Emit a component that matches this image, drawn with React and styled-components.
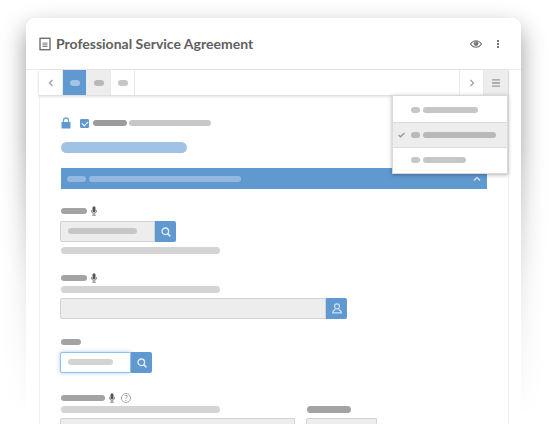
import styled, { createGlobalStyle, css } from 'styled-components'
import { useState } from 'react'

const tabs = ['Page one', 'Page two', 'Page three']

const sections = [
    { name: 'First section', width: 55 },
    { name: 'Second section', width: 73 },
    { name: 'Third section', width: 43 },
]

const DocumentIcon = () => (
    <svg width='12' height='14' viewBox='0 0 12 14' fill='none' stroke='#6f6f6f' aria-hidden='true'>
        <rect x='1' y='1.3' width='10' height='11.4' strokeWidth='1.4' />
        <path d='M3.5 6.1h5M3.5 7.8h5M3.5 9.5h5' strokeWidth='.9' />
    </svg>
)

const EyeIcon = () => (
    <svg width='14' height='10' viewBox='0 0 14 10' fill='none' stroke='#757575' aria-hidden='true'>
        <path d='M1.5 5C3 2.7 4.8 1.7 7 1.7S11 2.7 12.5 5C11 7.3 9.2 8.3 7 8.3S3 7.3 1.5 5Z' strokeWidth='1.1' />
        <circle cx='7' cy='4.6' r='2.4' fill='#757575' stroke='none' />
        <path d='M5.9 4.4a1.2 1.2 0 0 1 1.1-1.1' stroke='#ddd' strokeWidth='.7' />
    </svg>
)

const DotsIcon = () => (
    <svg width='4' height='10' viewBox='0 0 4 10' fill='#757575' aria-hidden='true'>
        <rect x='1' y='1' width='2' height='2' />
        <rect x='1' y='4' width='2' height='2' />
        <rect x='1' y='7' width='2' height='2' />
    </svg>
)

const Chevron = ({ d, color = '#a0a0a0' }) => (
    <svg width='8' height='8' viewBox='0 0 8 8' fill='none' stroke={color} strokeWidth='1.3' aria-hidden='true'>
        <path d={d} />
    </svg>
)

const MenuIcon = () => (
    <svg width='8' height='8' viewBox='0 0 8 8' stroke='#999' strokeWidth='1.3' aria-hidden='true'>
        <path d='M0 .8h8M0 4h8M0 7.2h8' />
    </svg>
)

const LockIcon = () => (
    <svg width='10' height='12' viewBox='0 0 10 12' fill='none' aria-hidden='true'>
        <path d='M2.5 6V3.5a2.5 2.5 0 0 1 5 0V6' stroke='#73a5d6' strokeWidth='1.3' />
        <rect x='.5' y='5' width='9' height='6.5' rx='.5' fill='#5f99d0' />
    </svg>
)

const MicIcon = () => (
    <svg width='6' height='10' viewBox='0 0 6 10' fill='none' aria-hidden='true'>
        <rect x='1.5' y='.3' width='3' height='6' rx='1.5' fill='#555' />
        <path d='M.5 4v.8a2.5 2.5 0 0 0 5 0V4M3 7.4v1.8M1.2 9.2h3.6' stroke='#777' strokeWidth='.9' />
    </svg>
)

const SearchIcon = () => (
    <svg width='10' height='10' viewBox='0 0 10 10' fill='none' stroke='#e3eef8' strokeWidth='1.3' aria-hidden='true'>
        <circle cx='4.3' cy='4.3' r='3.3' />
        <path d='M6.8 6.8L9.4 9.4' strokeWidth='1.5' />
    </svg>
)

const PersonIcon = () => (
    <svg width='10' height='11' viewBox='0 0 10 11' fill='none' stroke='#cfe1f3' strokeWidth='1.2' aria-hidden='true'>
        <circle cx='5' cy='3.3' r='2.5' />
        <path d='M3.4 6.3C3.4 7 .6 7 .6 9.9h8.8C9.4 7 6.6 7 6.6 6.3' />
    </svg>
)

const Tick = () => (
    <svg width='7' height='6' viewBox='0 0 7 6' fill='none' stroke='#999' strokeWidth='1.4' aria-hidden='true'>
        <path d='M.6 3L2.5 4.8L6.4 1' />
    </svg>
)

const Lookup = ({ id, label, width, children, button, focused, textWidth }) => (
    <InputGroup>
        <InputWrap $width={width}>
            <TextInput id={id} type='text' aria-label={label} $focused={focused} />
            {textWidth && <InputText $width={textWidth} $color={focused ? '#d3d3d3' : '#c6c6c6'} />}
        </InputWrap>
        <LookupButton type='button' aria-label={button}>{children}</LookupButton>
    </InputGroup>
)

const App = () => {
    const [tab, setTab] = useState(0)
    const [section, setSection] = useState(1)
    const [open, setOpen] = useState(true)

    return (
        <Page>
            <GlobalStyle />
            <Window>
                <Header>
                    <DocumentIcon />
                    <Title>Professional Service Agreement</Title>
                    <HeaderButton type='button' aria-label='Preview'><EyeIcon /></HeaderButton>
                    <HeaderButton type='button' aria-label='More'><DotsIcon /></HeaderButton>
                </Header>
                <Panel>
                    <TabBar>
                        <BarButton type='button' aria-label='Previous'><Chevron d='M5.5 1L2.5 4L5.5 7' /></BarButton>
                        {tabs.map((name, index) => (
                            <BarButton
                                key={name}
                                type='button'
                                aria-label={name}
                                $active={tab === index}
                                $shaded={index === 1}
                                onClick={() => setTab(index)}
                            >
                                <Pill $width={10} $color={tab === index ? '#a3c4e6' : index === 1 ? '#b8b8b8' : '#c6c6c6'} />
                            </BarButton>
                        ))}
                        <Spacer />
                        <BarButton type='button' aria-label='Next'><Chevron d='M2.5 1L5.5 4L2.5 7' /></BarButton>
                        <BarButton type='button' aria-label='Sections' $shaded onClick={() => setOpen(!open)}>
                            <MenuIcon />
                        </BarButton>
                        {open && (
                            <Menu>
                                {sections.map((item, index) => (
                                    <MenuItem
                                        key={item.name}
                                        type='button'
                                        aria-label={item.name}
                                        $selected={section === index}
                                        onClick={() => setSection(index)}
                                    >
                                        <TickSlot>{section === index && <Tick />}</TickSlot>
                                        <Pill $width={9} $color={section === index ? '#b9b9b9' : '#c6c6c6'} />
                                        <Pill $width={item.width} $color={section === index ? '#b9b9b9' : '#c6c6c6'} />
                                    </MenuItem>
                                ))}
                            </Menu>
                        )}
                    </TabBar>
                    <Form>
                        <CheckRow>
                            <LockIcon />
                            <Checkbox id='locked' type='checkbox' defaultChecked aria-label='Locked' />
                            <CheckLabel htmlFor='locked'>
                                <Pill $width={34} $color='#9c9c9c' />
                                <Pill $width={82} $color='#c8c8c8' />
                            </CheckLabel>
                        </CheckRow>
                        <Heading $width={126} $height={11} $color='#a0c2e4' />
                        <SectionBar type='button' aria-label='Collapse section'>
                            <Pill $width={19} $color='#94b9df' />
                            <Pill $width={152} $color='#94b9df' />
                            <Spacer />
                            <Chevron d='M1 5.5L4 2.5L7 5.5' color='#d7e5f4' />
                        </SectionBar>

                        <Field $top={17}>
                            <Label htmlFor='lookup'><Pill $width={26} $color='#a3a3a3' /><MicIcon /></Label>
                            <Lookup id='lookup' label='Lookup' width={95} textWidth={69} button='Search'>
                                <SearchIcon />
                            </Lookup>
                            <Hint $width={159} $height={7} $color='#d4d4d4' />
                        </Field>

                        <Field $top={14}>
                            <Label htmlFor='person'><Pill $width={26} $color='#a3a3a3' /><MicIcon /></Label>
                            <Hint $width={159} $height={7} $color='#d4d4d4' />
                            <Lookup id='person' label='Person' width={266} button='Choose person'>
                                <PersonIcon />
                            </Lookup>
                        </Field>

                        <Field $top={18}>
                            <Label htmlFor='search'><Pill $width={20} $color='#a3a3a3' /></Label>
                            <Lookup id='search' label='Search' width={71} textWidth={45} button='Search' focused>
                                <SearchIcon />
                            </Lookup>
                        </Field>

                        <Columns>
                            <Column $width={234}>
                                <Label htmlFor='notes'>
                                    <Pill $width={44} $color='#a3a3a3' />
                                    <MicIcon />
                                    <Help>?</Help>
                                </Label>
                                <Hint $width={159} $height={7} $color='#d4d4d4' />
                                <CutInput><TextInput id='notes' type='text' aria-label='Notes' /></CutInput>
                            </Column>
                            <Column $width={70}>
                                <label htmlFor='amount'>
                                    <Hint $width={44} $height={7} $color='#a3a3a3' />
                                </label>
                                <CutInput><TextInput id='amount' type='text' aria-label='Amount' /></CutInput>
                            </Column>
                        </Columns>
                    </Form>
                </Panel>
            </Window>
        </Page>
    )
}

export default App

const GlobalStyle = createGlobalStyle`
  * {
    box-sizing: border-box;
  }

  body {
    margin: 0;
    background: #fff;
    font-family: Lato, sans-serif;
  }

  button {
    padding: 0;
    border: 0;
    background: none;
    font: inherit;
    cursor: pointer;
  }

  svg {
    display: block;
    flex: none;
  }
`

const Page = styled.main`
  position: relative;
  padding: 18px 28px 19px 26px;
  overflow: hidden;

  /* drop shadow of the window, washed out towards the bottom */
  &::before {
    content: '';
    position: absolute;
    inset: 18px 28px 19px 26px;
    border-radius: 9px;
    box-shadow: 0 10px 24px rgba(0, 0, 0, 0.4);
  }

  &::after {
    content: '';
    position: absolute;
    inset: 0;
    background: linear-gradient(rgba(255, 255, 255, 0) 30%, rgba(255, 255, 255, 0.7) 65%, #fff 94%);
  }
`

const Window = styled.div`
  position: relative;
  z-index: 1;
  background: #fff;
  border-radius: 9px 9px 0 0;
`

const Header = styled.header`
  display: flex;
  align-items: center;
  height: 52px;
  padding: 0 21px 0 13px;
  border-bottom: 1px solid #ececec;
`

const Title = styled.h1`
  flex: 1;
  margin: 0 0 0 5px;
  color: #606060;
  font-size: 14px;
  font-weight: 700;
  line-height: 20px;
`

const HeaderButton = styled.button`
  margin-left: 13px;
`

const Panel = styled.div`
  margin: 0 12px 0 13px;
  border: solid #f0f0f0;
  border-width: 0 1px;
`

const TabBar = styled.nav`
  position: relative;
  display: flex;
  height: 25px;
  margin-left: -1px;
  box-shadow: 0 1px 3px rgba(0, 0, 0, 0.2);
`

const BarButton = styled.button`
  display: flex;
  align-items: center;
  justify-content: center;
  width: 24px;
  border: solid #e9e9e9;
  border-width: 0 1px 0 0;
  background: ${({ $active, $shaded }) => ($active ? '#5f99d0' : $shaded ? '#ededed' : '#fff')};
`

const Spacer = styled.span`
  flex: 1;

  ${TabBar} > & {
    border-right: 1px solid #e9e9e9;
  }
`

const Pill = styled.span`
  display: block;
  flex: none;
  width: ${({ $width }) => $width}px;
  height: ${({ $height = 6 }) => $height}px;
  border-radius: 6px;
  background: ${({ $color }) => $color};
`

const Menu = styled.div`
  position: absolute;
  z-index: 2;
  top: 25px;
  right: 0;
  width: 116px;
  padding-top: 1px;
  background: #fff;
  border: 1px solid #d9d9d9;
  box-shadow: 0 1px 4px rgba(0, 0, 0, 0.3);
`

const MenuItem = styled.button`
  display: flex;
  align-items: center;
  gap: 3px;
  width: 100%;
  height: 26px;
  padding-left: 5px;
  background: #fff;

  ${({ $selected }) => $selected && css`
    position: relative;
    height: 24px;
    background: #ededed;
    box-shadow: 0 0 0 1px #dcdcdc;
  `}
`

const TickSlot = styled.span`
  width: 10px;
`

const Form = styled.form`
  padding: 22px 21px 0;
`

const CheckRow = styled.div`
  display: flex;
  align-items: center;
  height: 12px;
`

const Checkbox = styled.input`
  appearance: none;
  position: relative;
  width: 9px;
  height: 9px;
  margin: 0 4px 0 9px;
  border: 1px solid #5f99d0;
  border-radius: 1px;

  &:checked {
    background: #5f99d0;
  }

  &:checked::after {
    content: '';
    position: absolute;
    left: 2px;
    top: 0;
    width: 3px;
    height: 5px;
    border: solid #fff;
    border-width: 0 1px 1px 0;
    transform: rotate(45deg);
  }
`

const CheckLabel = styled.label`
  display: flex;
  gap: 2px;
`

const Heading = styled(Pill)`
  margin: 13px 0 15px;
`

const SectionBar = styled.button`
  display: flex;
  align-items: center;
  gap: 3px;
  width: 100%;
  height: 21px;
  padding: 0 6px;
  background: #5f99d0;
`

const Field = styled.div`
  padding-top: ${({ $top }) => $top}px;
`

const Label = styled.label`
  display: flex;
  align-items: center;
  gap: 4px;
  height: 10px;
`

const Hint = styled(Pill)`
  margin: 5px 0;

  ${Label} + & {
    margin-top: 3px;
  }
`

const InputGroup = styled.div`
  display: flex;
  height: 21px;
  margin-left: -1px;

  ${Label} + & {
    margin-top: 5px;
  }
`

const InputWrap = styled.div`
  position: relative;
  width: ${({ $width }) => $width}px;
`

const TextInput = styled.input`
  display: block;
  width: 100%;
  height: 21px;
  padding: 0 7px;
  border: 1px solid #d2d2d2;
  border-radius: 2px 0 0 2px;
  background: #ededed;
  font: 12px Lato, sans-serif;
  outline: none;

  ${({ $focused }) => $focused && css`
    border-color: #93c0ea;
    background: #fff;
    box-shadow: 0 0 4px rgba(95, 160, 220, 0.5);
  `}
`

const InputText = styled(Pill)`
  position: absolute;
  top: 7px;
  left: 8px;
  pointer-events: none;
`

const LookupButton = styled.button`
  position: relative;
  display: flex;
  align-items: center;
  justify-content: center;
  width: 21px;
  border-radius: 0 2px 2px 0;
  background: #5f99d0;
`

const Columns = styled.div`
  display: flex;
  align-items: flex-end;
  gap: 12px;
  padding-top: 20px;
`

const Column = styled.div`
  width: ${({ $width }) => $width}px;
`

const Help = styled.span`
  width: 10px;
  height: 10px;
  margin-left: 2px;
  border: 1px solid #aaa;
  border-radius: 50%;
  color: #888;
  font-size: 8px;
  line-height: 8px;
  text-align: center;
`

/* last row runs off the bottom of the window */
const CutInput = styled.div`
  height: 6px;
  margin-left: -1px;
  overflow: hidden;
`
